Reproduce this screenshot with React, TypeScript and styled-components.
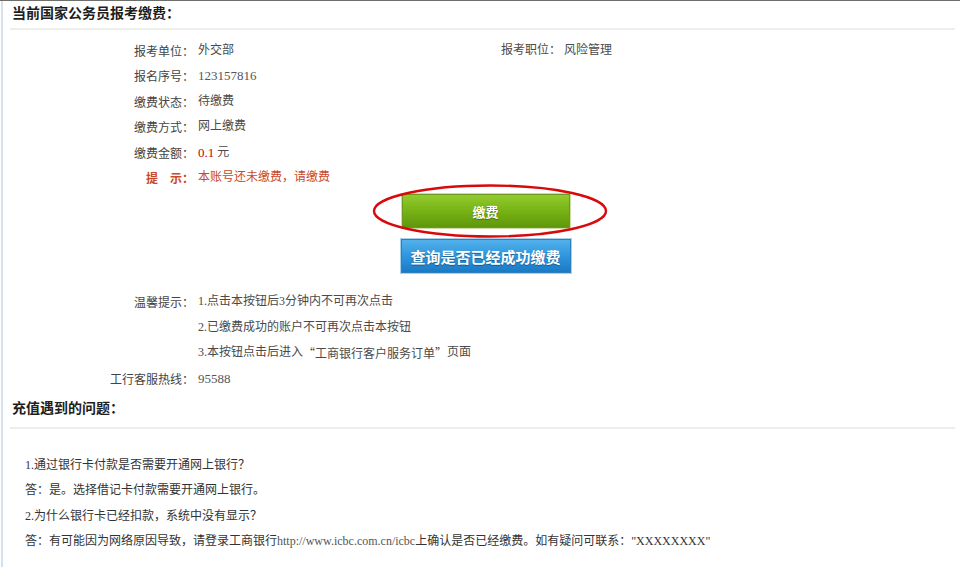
import React from 'react';
import styled, { createGlobalStyle } from 'styled-components';

const GlobalStyle = createGlobalStyle`
  body {
    margin: 0;
    background: #fff;
    font-family: "Liberation Serif", "Noto Sans CJK SC", serif;
  }
`;

const Page = styled.div`
  width: 960px;
  height: 567px;
  box-sizing: border-box;
  border-top: 1px solid #6e6e6a;
  overflow: hidden;
`;

const Frame = styled.div`
  margin-left: 1px;
  height: 100%;
  border-left: 2px solid #d3e2ee;
  padding: 0 5px 0 7px;
  box-sizing: border-box;
`;

const SectionTitle = styled.h2<{ $gap?: number; $below?: number }>`
  margin: ${(p) => p.$gap ?? 0}px 0 0;
  padding: 0 0 ${(p) => p.$below ?? 5}px 2px;
  font-family: "Noto Sans CJK SC", sans-serif;
  font-size: 14px;
  font-weight: 700;
  line-height: 22px;
  color: #1e1e1e;
  border-bottom: 2px solid #ecefea;
`;

const Rows = styled.div<{ $top?: number }>`
  padding-top: ${(p) => p.$top ?? 8}px;
  font-size: 12px;
  color: #444;
`;

const Row = styled.div`
  display: grid;
  grid-template-columns: 184px 1fr;
  line-height: 25.4px;
  height: 25.4px;
`;

const Label = styled.span<{ $tip?: boolean }>`
  text-align: right;
  font-family: "Noto Sans CJK SC", sans-serif;
  white-space: pre;
  color: ${(p) => (p.$tip ? '#c8492a' : '#444')};
  font-weight: ${(p) => (p.$tip ? 700 : 400)};
`;

const Value = styled.span<{ $tip?: boolean }>`
  padding-left: 4px;
  display: flex;
  color: ${(p) => (p.$tip ? '#c8492a' : '#4a4a4a')};
`;

const Num = styled.span`
  color: #555;
  font-size: 13px;
`;

const Money = styled.span`
  color: #c40000;
  font-size: 13px;
  margin-right: 3px;
`;

const Pair = styled.span`
  width: 303px;
`;

const Quote = styled.span`
  font-family: "Noto Sans CJK SC", sans-serif;
`;

const Buttons = styled.div`
  display: flex;
  flex-direction: column;
  align-items: center;
  gap: 9px;
  margin: 3px 0 15px;
  padding-left: 6px;
`;

const Circled = styled.div`
  position: relative;
`;

const Ring = styled.svg`
  position: absolute;
  left: -29px;
  top: -10px;
  pointer-events: none;
`;

const Btn = styled.button<{ $color: 'green' | 'blue' }>`
  width: ${(p) => (p.$color === 'green' ? 170 : 172)}px;
  height: 36px;
  border: 1px solid ${(p) => (p.$color === 'green' ? '#cfdca8' : '#a9cfe9')};
  outline: 1px solid ${(p) => (p.$color === 'green' ? '#6d9a1e' : '#2f7fba')};
  outline-offset: -2px;
  background: ${(p) =>
    p.$color === 'green'
      ? 'linear-gradient(#93cc2e, #74b014 55%, #5e960a)'
      : 'linear-gradient(#55b2ec, #2b93dc 55%, #1a78c4)'};
  color: #fff;
  font-family: "Noto Sans CJK SC", sans-serif;
  font-weight: 700;
  font-size: ${(p) => (p.$color === 'green' ? 13 : 15)}px;
  text-shadow: 0 1px 1px rgba(0, 0, 0, 0.35);
  padding: 0;
  cursor: pointer;
`;

const QA = styled.div`
  padding: 24px 0 0 15px;
  font-size: 12px;
  color: #333;
`;

const Line = styled.div`
  line-height: 25.4px;
  height: 25.4px;
`;

const Url = styled.span`
  color: #555;
`;

const App = () => {
  return (
    <Page>
      <GlobalStyle />
      <Frame>
        <SectionTitle>当前国家公务员报考缴费：</SectionTitle>
        <Rows>
          <Row>
            <Label>报考单位：</Label>
            <Value>
              <Pair>外交部</Pair>
              <span>报考职位：&nbsp;风险管理</span>
            </Value>
          </Row>
          <Row>
            <Label>报名序号：</Label>
            <Value>
              <Num>123157816</Num>
            </Value>
          </Row>
          <Row>
            <Label>缴费状态：</Label>
            <Value>待缴费</Value>
          </Row>
          <Row>
            <Label>缴费方式：</Label>
            <Value>网上缴费</Value>
          </Row>
          <Row>
            <Label>缴费金额：</Label>
            <Value>
              <Money>0.1</Money>元
            </Value>
          </Row>
          <Row>
            <Label $tip>提　示：</Label>
            <Value $tip>本账号还未缴费，请缴费</Value>
          </Row>
        </Rows>

        <Buttons>
          <Circled>
            <Btn $color="green">缴费</Btn>
            <Ring width="236" height="56" viewBox="0 0 236 56">
              <ellipse cx="118" cy="28" rx="116" ry="25.5" fill="none" stroke="#d8090b" strokeWidth="2.4" />
            </Ring>
          </Circled>
          <Btn $color="blue">查询是否已经成功缴费</Btn>
        </Buttons>

        <Rows $top={0}>
          <Row>
            <Label>温馨提示：</Label>
            <Value>1.点击本按钮后3分钟内不可再次点击</Value>
          </Row>
          <Row>
            <Label />
            <Value>2.已缴费成功的账户不可再次点击本按钮</Value>
          </Row>
          <Row>
            <Label />
            <Value>
              3.本按钮点击后进入<Quote>“工商银行客户服务订单”</Quote>页面
            </Value>
          </Row>
          <Row>
            <Label>工行客服热线：</Label>
            <Value>
              <Num>95588</Num>
            </Value>
          </Row>
        </Rows>

        <SectionTitle $gap={5} $below={9}>充值遇到的问题：</SectionTitle>
        <QA>
          <Line>1.通过银行卡付款是否需要开通网上银行？</Line>
          <Line>答：是。选择借记卡付款需要开通网上银行。</Line>
          <Line>2.为什么银行卡已经扣款，系统中没有显示？</Line>
          <Line>
            答：有可能因为网络原因导致，请登录工商银行<Url>http://www.icbc.com.cn/icbc</Url>上确认是否已经缴费。如有疑问可联系："XXXXXXXX"
          </Line>
        </QA>
      </Frame>
    </Page>
  );
};

export default App;
